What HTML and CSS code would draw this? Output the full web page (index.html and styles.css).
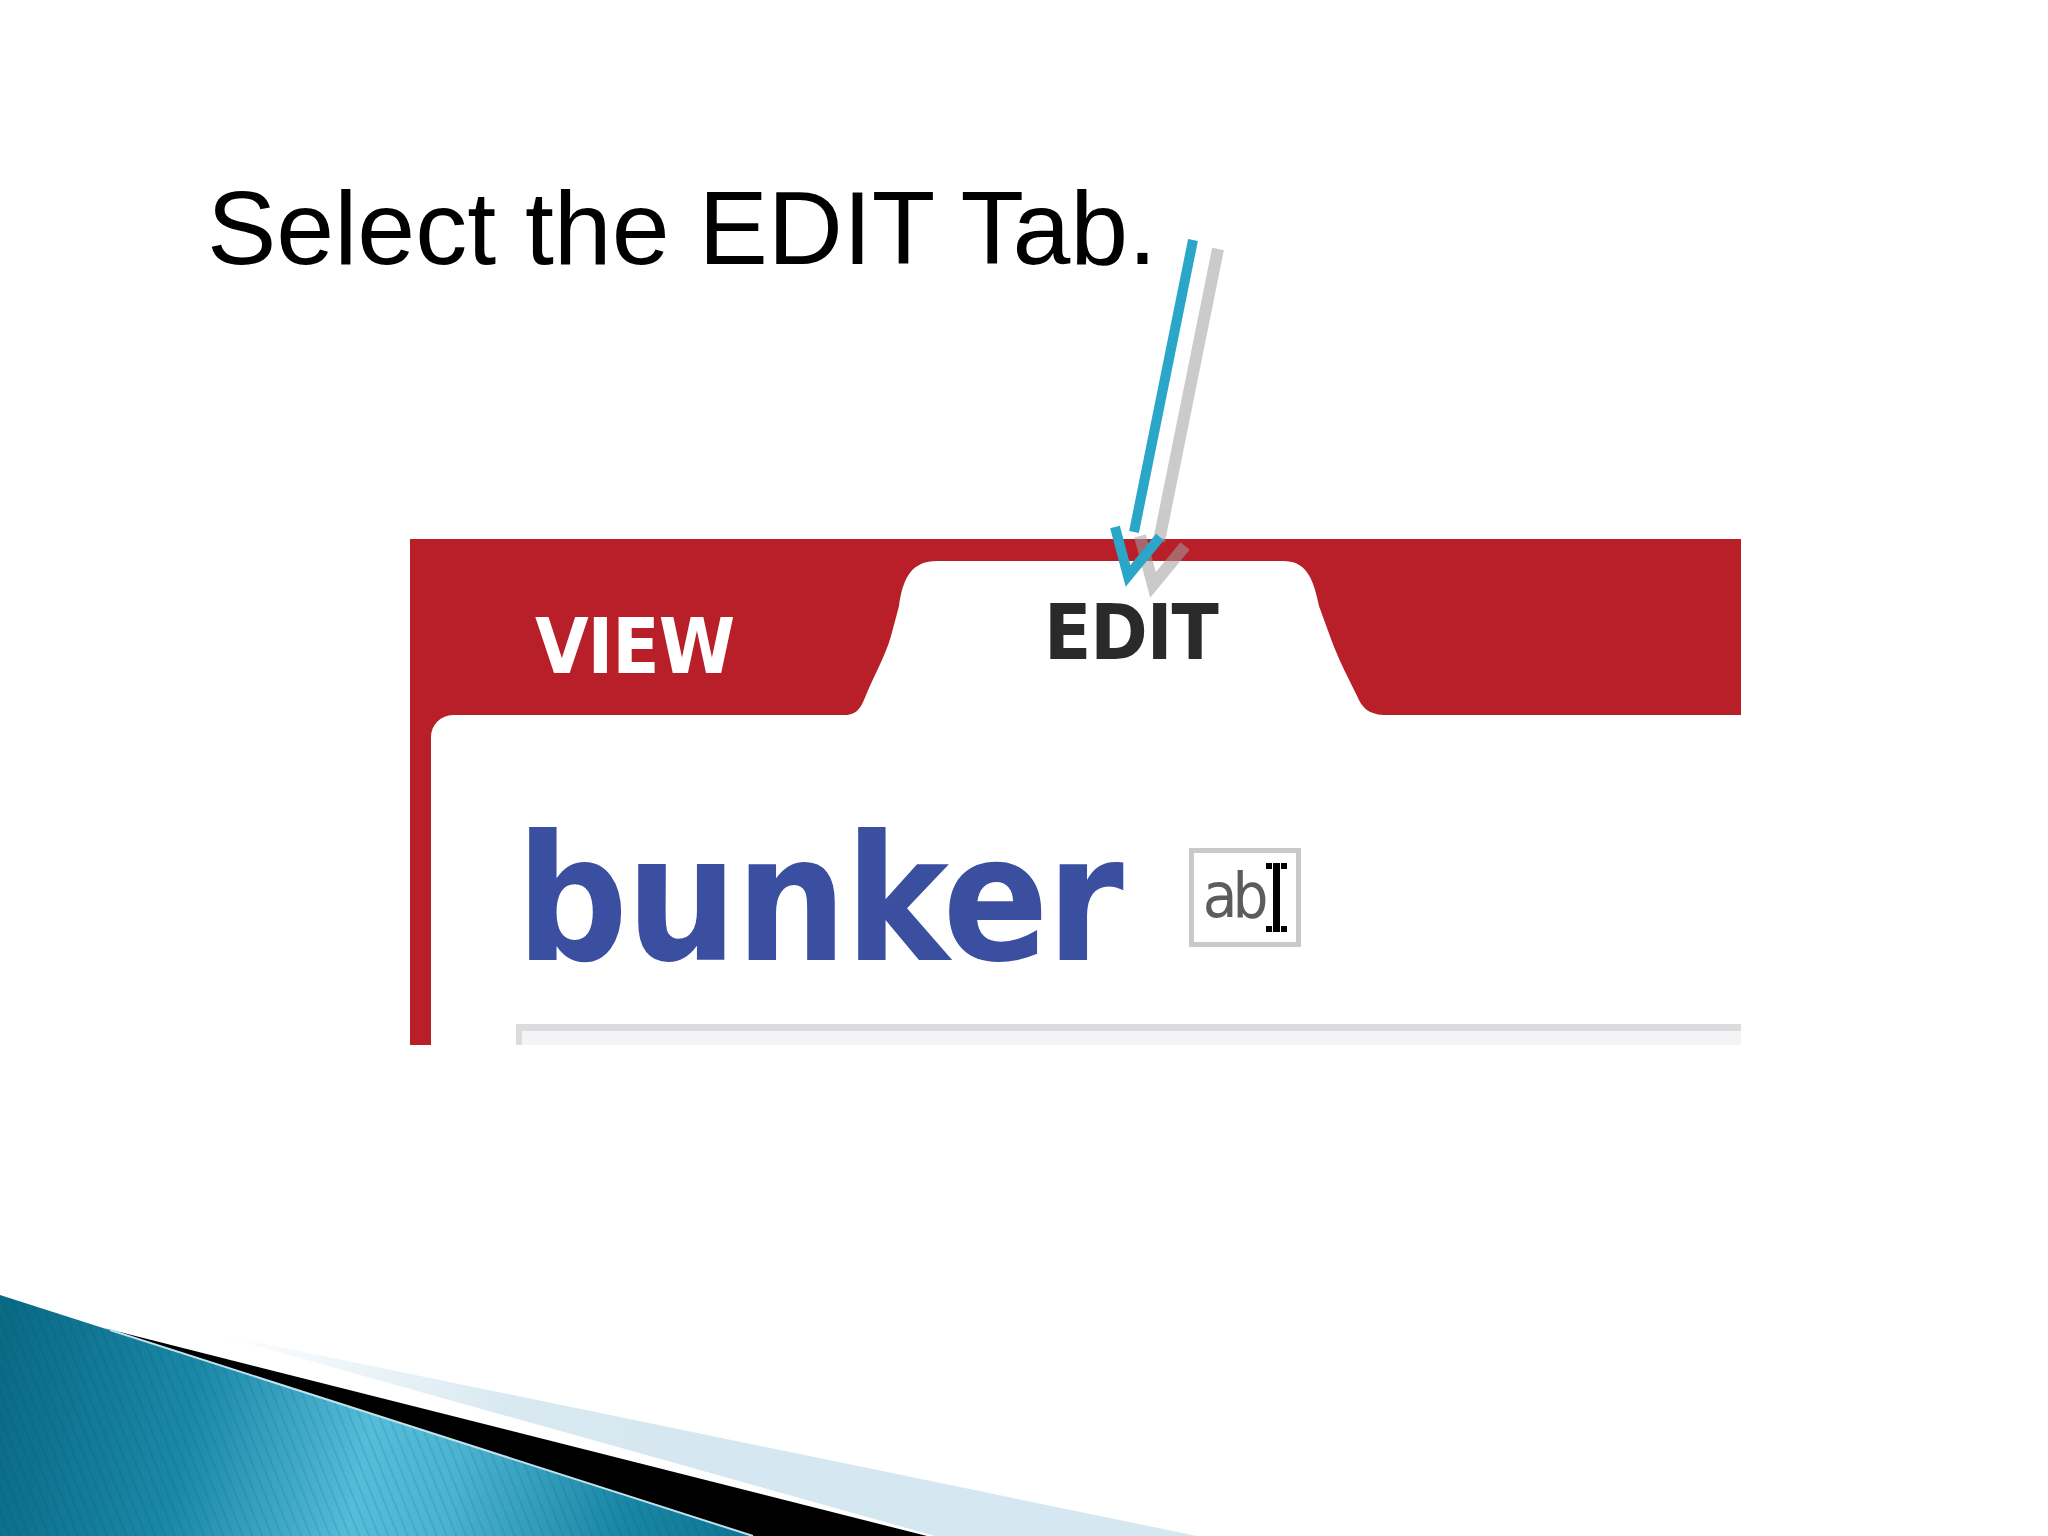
FILE: index.html
```html
<!DOCTYPE html>
<html lang="en">
<head>
<meta charset="utf-8">
<title>Select the EDIT Tab.</title>
<link rel="stylesheet" href="styles.css">
</head>
<body>
<div class="slide">
  <h1 class="title">Select the EDIT Tab.</h1>
  <div class="shot">
    <div class="tabs">
      <div class="tab tab-view">VIEW</div>
      <div class="tab tab-edit">EDIT</div>
    </div>
    <div class="content">
      <div class="heading">
        <span class="word">bunker</span>
        <span class="ab-icon">
          <span class="ab">ab</span>
          <svg class="ibeam" width="21" height="69" viewBox="0 0 21 69">
            <rect x="7" y="0" width="7" height="69" fill="#000"/>
            <rect x="0" y="0" width="6" height="6" fill="#000"/>
            <rect x="15" y="0" width="6" height="6" fill="#000"/>
            <rect x="0" y="63" width="6" height="6" fill="#000"/>
            <rect x="15" y="63" width="6" height="6" fill="#000"/>
          </svg>
        </span>
      </div>
      <div class="field"></div>
    </div>
  </div>

  <svg class="arrow" viewBox="0 0 2048 1536" width="2048" height="1536">
    <g class="arrow-shadow" transform="translate(25 9)">
      <line x1="1193" y1="240" x2="1134" y2="532"/>
      <polyline points="1115,527 1128,576 1160,537"/>
    </g>
    <g class="arrow-main">
      <line x1="1193" y1="240" x2="1134" y2="532"/>
      <polyline points="1115,527 1128,576 1160,537"/>
    </g>
  </svg>

  <svg class="deco" viewBox="0 1276 1300 260" width="1300" height="260">
    <defs>
      <linearGradient id="teal" gradientUnits="userSpaceOnUse" x1="0" y1="1380" x2="760" y2="1536">
        <stop offset="0" stop-color="#0a6b87"/>
        <stop offset="0.25" stop-color="#1b88a8"/>
        <stop offset="0.48" stop-color="#55bcd9"/>
        <stop offset="0.6" stop-color="#4cb3d1"/>
        <stop offset="0.82" stop-color="#1a87a6"/>
        <stop offset="1" stop-color="#0c7491"/>
      </linearGradient>
      <linearGradient id="pale" gradientUnits="userSpaceOnUse" x1="207" y1="1332" x2="700" y2="1470">
        <stop offset="0" stop-color="#ffffff"/>
        <stop offset="0.6" stop-color="#d9e9f2"/>
        <stop offset="1" stop-color="#d5e7f0"/>
      </linearGradient>
      <pattern id="stripes" patternUnits="userSpaceOnUse" width="9" height="9" patternTransform="rotate(-22)">
        <rect x="0" y="0" width="1.5" height="9" fill="#003d52" fill-opacity="0.14"/>
      </pattern>
    </defs>
    <polygon points="207,1332 1197,1536 935,1536" fill="url(#pale)"/>
    <polygon points="104,1328 927,1536 753,1536" fill="#000"/>
    <polygon points="0,1295 753,1536 0,1536" fill="url(#teal)"/>
    <polygon points="0,1295 753,1536 0,1536" fill="url(#stripes)"/>
    <line x1="110" y1="1330" x2="753" y2="1536" stroke="#bfe2ec" stroke-width="2"/>
  </svg>
</div>
</body>
</html>
```
FILE: styles.css
```css
html, body {
  margin: 0;
  padding: 0;
}

body {
  background: #ffffff;
  width: 2048px;
  height: 1536px;
  overflow: hidden;
}

.slide {
  position: relative;
  width: 2048px;
  height: 1536px;
  display: flex;
  flex-direction: column;
}

.title {
  margin: 176px 0 0 207px;
  font-family: "Liberation Sans", Arial, sans-serif;
  font-weight: 400;
  font-size: 104px;
  line-height: 104px;
  color: #000000;
}

.shot {
  margin: 259px 0 0 410px;
  width: 1331px;
  height: 506px;
  background: #b81f28;
  display: flex;
  flex-direction: column;
  overflow: hidden;
}

.tabs {
  height: 176px;
  flex-shrink: 0;
  display: flex;
  align-items: flex-start;
}

.tab {
  font-family: "DejaVu Sans Condensed", "DejaVu Sans", sans-serif;
  font-stretch: condensed;
  font-weight: 700;
  font-size: 77px;
  line-height: 77px;
  letter-spacing: -1px;
}

.tab-view {
  width: 312px;
  margin-left: 125px;
  padding-top: 69px;
  color: #ffffff;
}

.tab-edit {
  box-sizing: border-box;
  margin-top: 22px;
  width: 536px;
  height: 154px;
  padding: 33px 0 0 197px;
  background: #ffffff;
  color: #2a2a2a;
  clip-path: path('M0,154 C10,153 14,146 17,139 C28,112 38,96 44,75 L52,45 C56,15 66,0 90,0 L436,0 C458,0 466,15 472,45 L484,78 C492,100 502,118 512,139 C516,147 522,153 536,154 Z');
}

.content {
  flex: 1;
  margin-left: 21px;
  background: #ffffff;
  border-top-left-radius: 22px;
  display: flex;
  flex-direction: column;
}

.heading {
  display: flex;
  align-items: flex-start;
  height: 174px;
  margin: 98px 0 0 85px;
}

.word {
  font-family: "DejaVu Sans Condensed", "DejaVu Sans", sans-serif;
  font-stretch: condensed;
  font-weight: 700;
  font-size: 174px;
  line-height: 174px;
  letter-spacing: -2px;
  color: #3b4fa1;
}

.ab-icon {
  margin: 35px 0 0 67px;
  width: 102px;
  height: 89px;
  border: 5px solid #c9c9c9;
  background: #ffffff;
  display: flex;
  align-items: flex-start;
}

.ab {
  margin: 11px 0 0 9px;
  font-family: "DejaVu Sans Condensed", "DejaVu Sans", sans-serif;
  font-stretch: condensed;
  font-size: 63px;
  line-height: 63px;
  letter-spacing: -5px;
  color: #5c5c5c;
}

.ibeam {
  margin: 10px 0 0 2px;
  flex-shrink: 0;
}

.field {
  margin: 37px 0 0 85px;
  height: 40px;
  border-top: 7px solid #dcdcdf;
  border-left: 6px solid #dcdcdf;
  background: #f4f4f6;
}

.arrow {
  position: absolute;
  left: 0;
  top: 0;
  pointer-events: none;
}

.arrow line,
.arrow polyline {
  fill: none;
  stroke-width: 10;
  stroke-linejoin: miter;
}

.arrow-shadow line,
.arrow-shadow polyline {
  stroke-width: 12;
}

.arrow-shadow {
  stroke: #a0a0a0;
  opacity: 0.55;
}

.arrow-main {
  stroke: #2aa6c8;
}

.deco {
  position: absolute;
  left: 0;
  bottom: 0;
}
```
